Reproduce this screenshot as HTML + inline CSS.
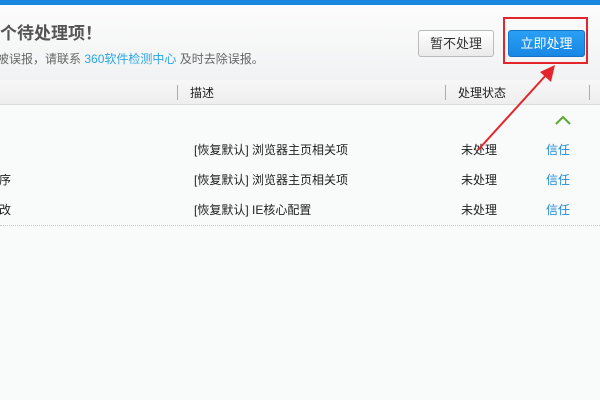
<!DOCTYPE html>
<html><head><meta charset="utf-8"><style>
body{margin:0;width:600px;height:400px;overflow:hidden;background:#f9fafa;font-family:"Liberation Sans","Noto Sans CJK SC",sans-serif;position:relative}
.a{position:absolute;white-space:nowrap}
.top{left:0;top:0;width:600px;height:5px;background:#1a87e0}
.hdr{left:0;top:5px;width:600px;height:75px;background:linear-gradient(#fcfcfc,#f1f2f3);border-bottom:1px solid #dcdcdc}
.th{left:0;top:80px;width:600px;height:24px;background:linear-gradient(#f7f7f7,#eeeeee);border-bottom:1px solid #dcdcdc}
.t{font-size:12px;color:#222}
.btn{height:25px;border-radius:3px;font-size:13px;text-align:center;line-height:25px}
.blue{color:#1e8ad6}
</style></head><body>
<div class="a top"></div>
<div class="a hdr"></div>
<div class="a" style="left:0;top:19px;font-size:17px;font-weight:bold;color:#555">个待处理项！</div>
<div class="a" style="left:-3px;top:50px;font-size:12px;color:#666">被误报，请联系 <span style="color:#2aa7e6">360软件检测中心</span> 及时去除误报。</div>
<div class="a btn" style="left:418px;top:30px;width:74px;border:1px solid #bbb;background:linear-gradient(#fff,#eaeaea);color:#333">暂不处理</div>
<div class="a btn" style="left:508px;top:30px;width:75px;border:1px solid #1274c8;background:linear-gradient(#2aa0f4,#1787e4);color:#fff">立即处理</div>
<div class="a" style="left:503px;top:17px;width:81px;height:43px;border:2px solid #e3262c"></div>
<div class="a th"></div>
<div class="a" style="left:177px;top:85px;width:1px;height:15px;background:#aaa"></div>
<div class="a" style="left:445px;top:85px;width:1px;height:15px;background:#aaa"></div>
<div class="a" style="left:589px;top:85px;width:1px;height:15px;background:#aaa"></div>
<div class="a t" style="left:190px;top:84px">描述</div>
<div class="a t" style="left:458px;top:84px">处理状态</div>
<svg class="a" style="left:555px;top:115px" width="16" height="10"><path d="M1 9 L8 2 L15 9" stroke="#5aa832" stroke-width="2" fill="none"/></svg>
<div class="a t" style="left:194px;top:141px">[恢复默认] 浏览器主页相关项</div>
<div class="a t" style="left:461px;top:141px">未处理</div>
<div class="a t blue" style="left:546px;top:141px">信任</div>
<div class="a t" style="left:-1px;top:171px">序</div>
<div class="a t" style="left:194px;top:171px">[恢复默认] 浏览器主页相关项</div>
<div class="a t" style="left:461px;top:171px">未处理</div>
<div class="a t blue" style="left:546px;top:171px">信任</div>
<div class="a t" style="left:-1px;top:201px">改</div>
<div class="a t" style="left:194px;top:201px">[恢复默认] IE核心配置</div>
<div class="a t" style="left:461px;top:201px">未处理</div>
<div class="a t blue" style="left:546px;top:201px">信任</div>
<div class="a" style="left:0;top:225px;width:600px;border-top:1px dotted #ccc"></div>
<svg class="a" style="left:0;top:0" width="600" height="400"><line x1="478" y1="150" x2="547" y2="74" stroke="#e3262c" stroke-width="2"/><path d="M555 65 L540 72 L551 82 Z" fill="#e3262c"/></svg>
</body></html>
